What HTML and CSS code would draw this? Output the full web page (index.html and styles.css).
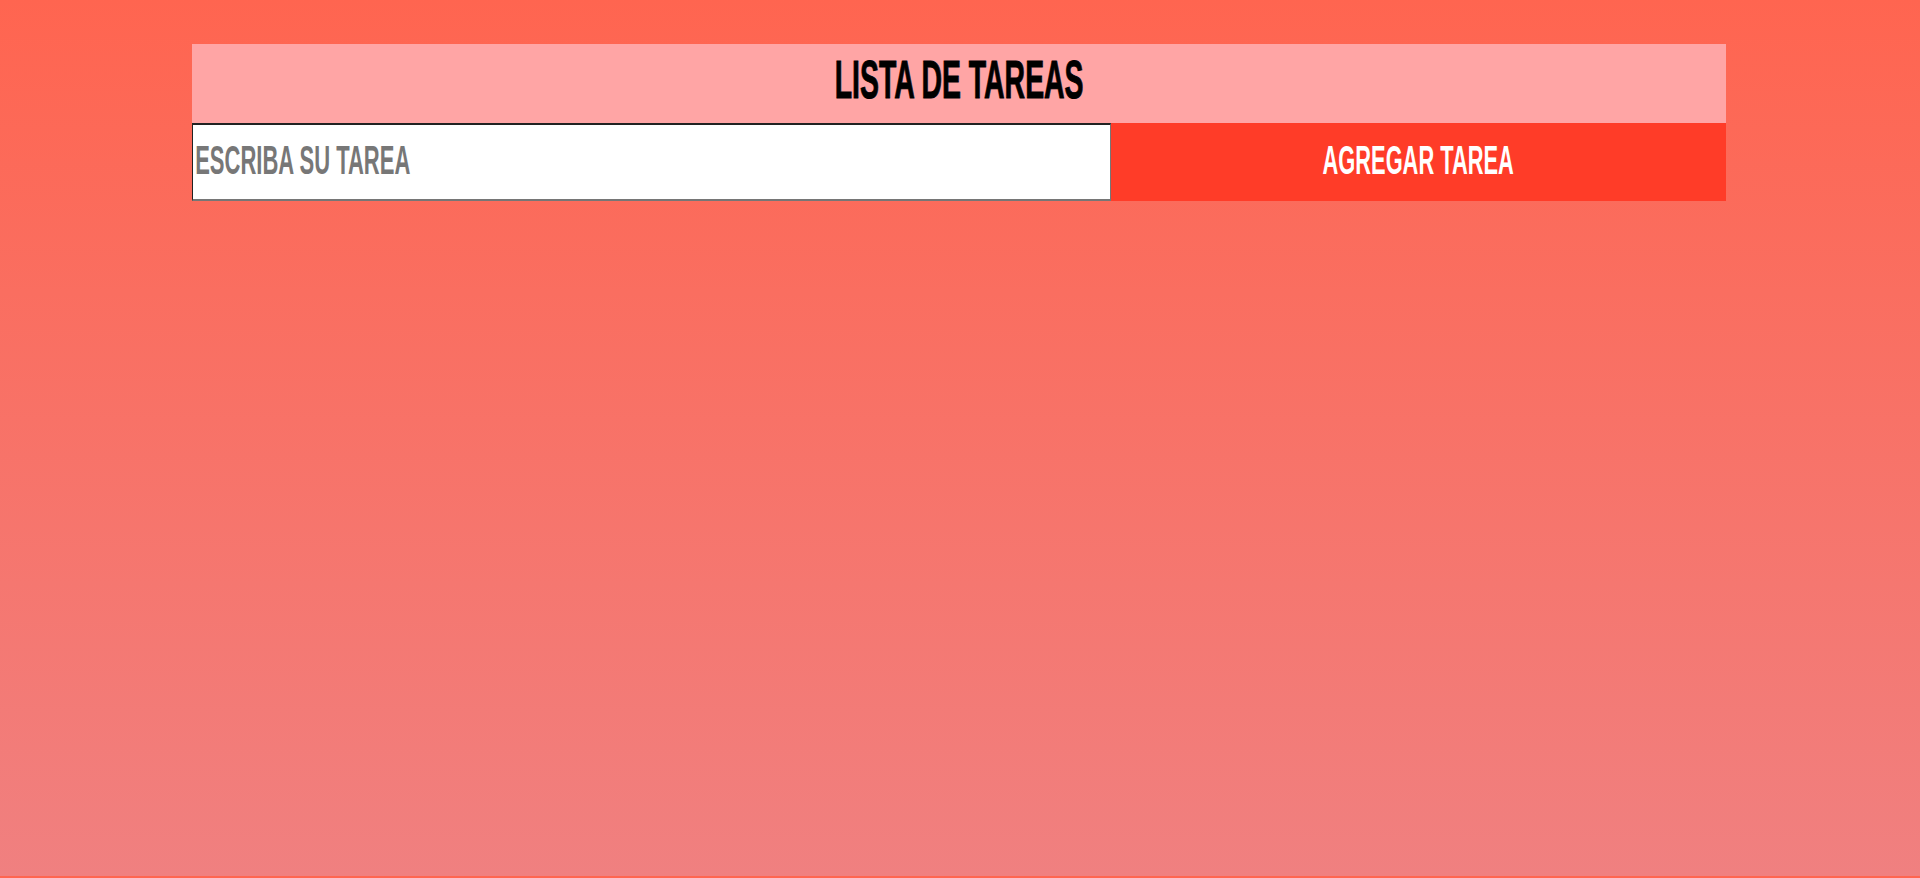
FILE: index.html
```html
<!DOCTYPE html>
<html lang="es">
<head>
<meta charset="utf-8">
<title>Lista de tareas</title>
<link rel="stylesheet" href="styles.css">
</head>
<body>
  <main class="app">
    <header class="app-header">
      <h1 class="title"><span class="condensed">Lista de tareas</span></h1>
    </header>
    <form class="task-form" onsubmit="return false;">
      <div class="input-wrap">
        <input class="task-input" type="text" placeholder="Escriba su tarea">
      </div>
      <button class="task-button" type="submit"><span class="condensed">Agregar tarea</span></button>
    </form>
  </main>
</body>
</html>
```
FILE: styles.css
```css
html {
  background: linear-gradient(to bottom, #ff6550, #f08080);
  background-size: 100% 876px;
  min-height: 100%;
}

body {
  margin: 0;
  padding-top: 44px;
  font-family: "Liberation Sans", "DejaVu Sans Condensed", sans-serif;
}

.app {
  width: 1534px;
  margin: 0 0 0 192px;
}

.app-header {
  background: #ffa5a5;
  height: 79px;
  display: flex;
  align-items: center;
  justify-content: center;
}

.title {
  margin: 0 0 8px 0;
  font-size: 53px;
  line-height: 1;
  font-weight: 700;
  text-transform: uppercase;
  color: #000;
  -webkit-text-stroke: 1px #000;
}

.condensed {
  display: inline-block;
  transform: scaleX(0.536);
  transform-origin: center;
  white-space: nowrap;
}

.task-form {
  display: flex;
  height: 78px;
  margin: 0;
}

.input-wrap {
  flex: 0 0 919px;
  box-sizing: border-box;
  overflow: hidden;
  border-style: solid;
  border-width: 2px 1px 2px 1px;
  border-color: #222 #767676 #767676 #222;
  background: #fff;
}

.task-input {
  display: block;
  width: 1667px;
  height: 100%;
  box-sizing: border-box;
  margin: 0;
  padding: 0 0 4px 4px;
  border: none;
  background: transparent;
  font-family: inherit;
  font-weight: 700;
  font-size: 40px;
  text-transform: uppercase;
  outline: none;
  transform: scaleX(0.55);
  transform-origin: left center;
}

.task-input::placeholder {
  color: #777;
  opacity: 1;
}

.task-button {
  flex: 1;
  margin: 0;
  padding: 0 0 4px 0;
  border: none;
  background: #ff3c28;
  color: #fff;
  font-family: inherit;
  font-weight: 700;
  font-size: 40px;
  line-height: 1;
  text-transform: uppercase;
  cursor: pointer;
}

.task-button .condensed {
  transform: scaleX(0.546);
}
```
